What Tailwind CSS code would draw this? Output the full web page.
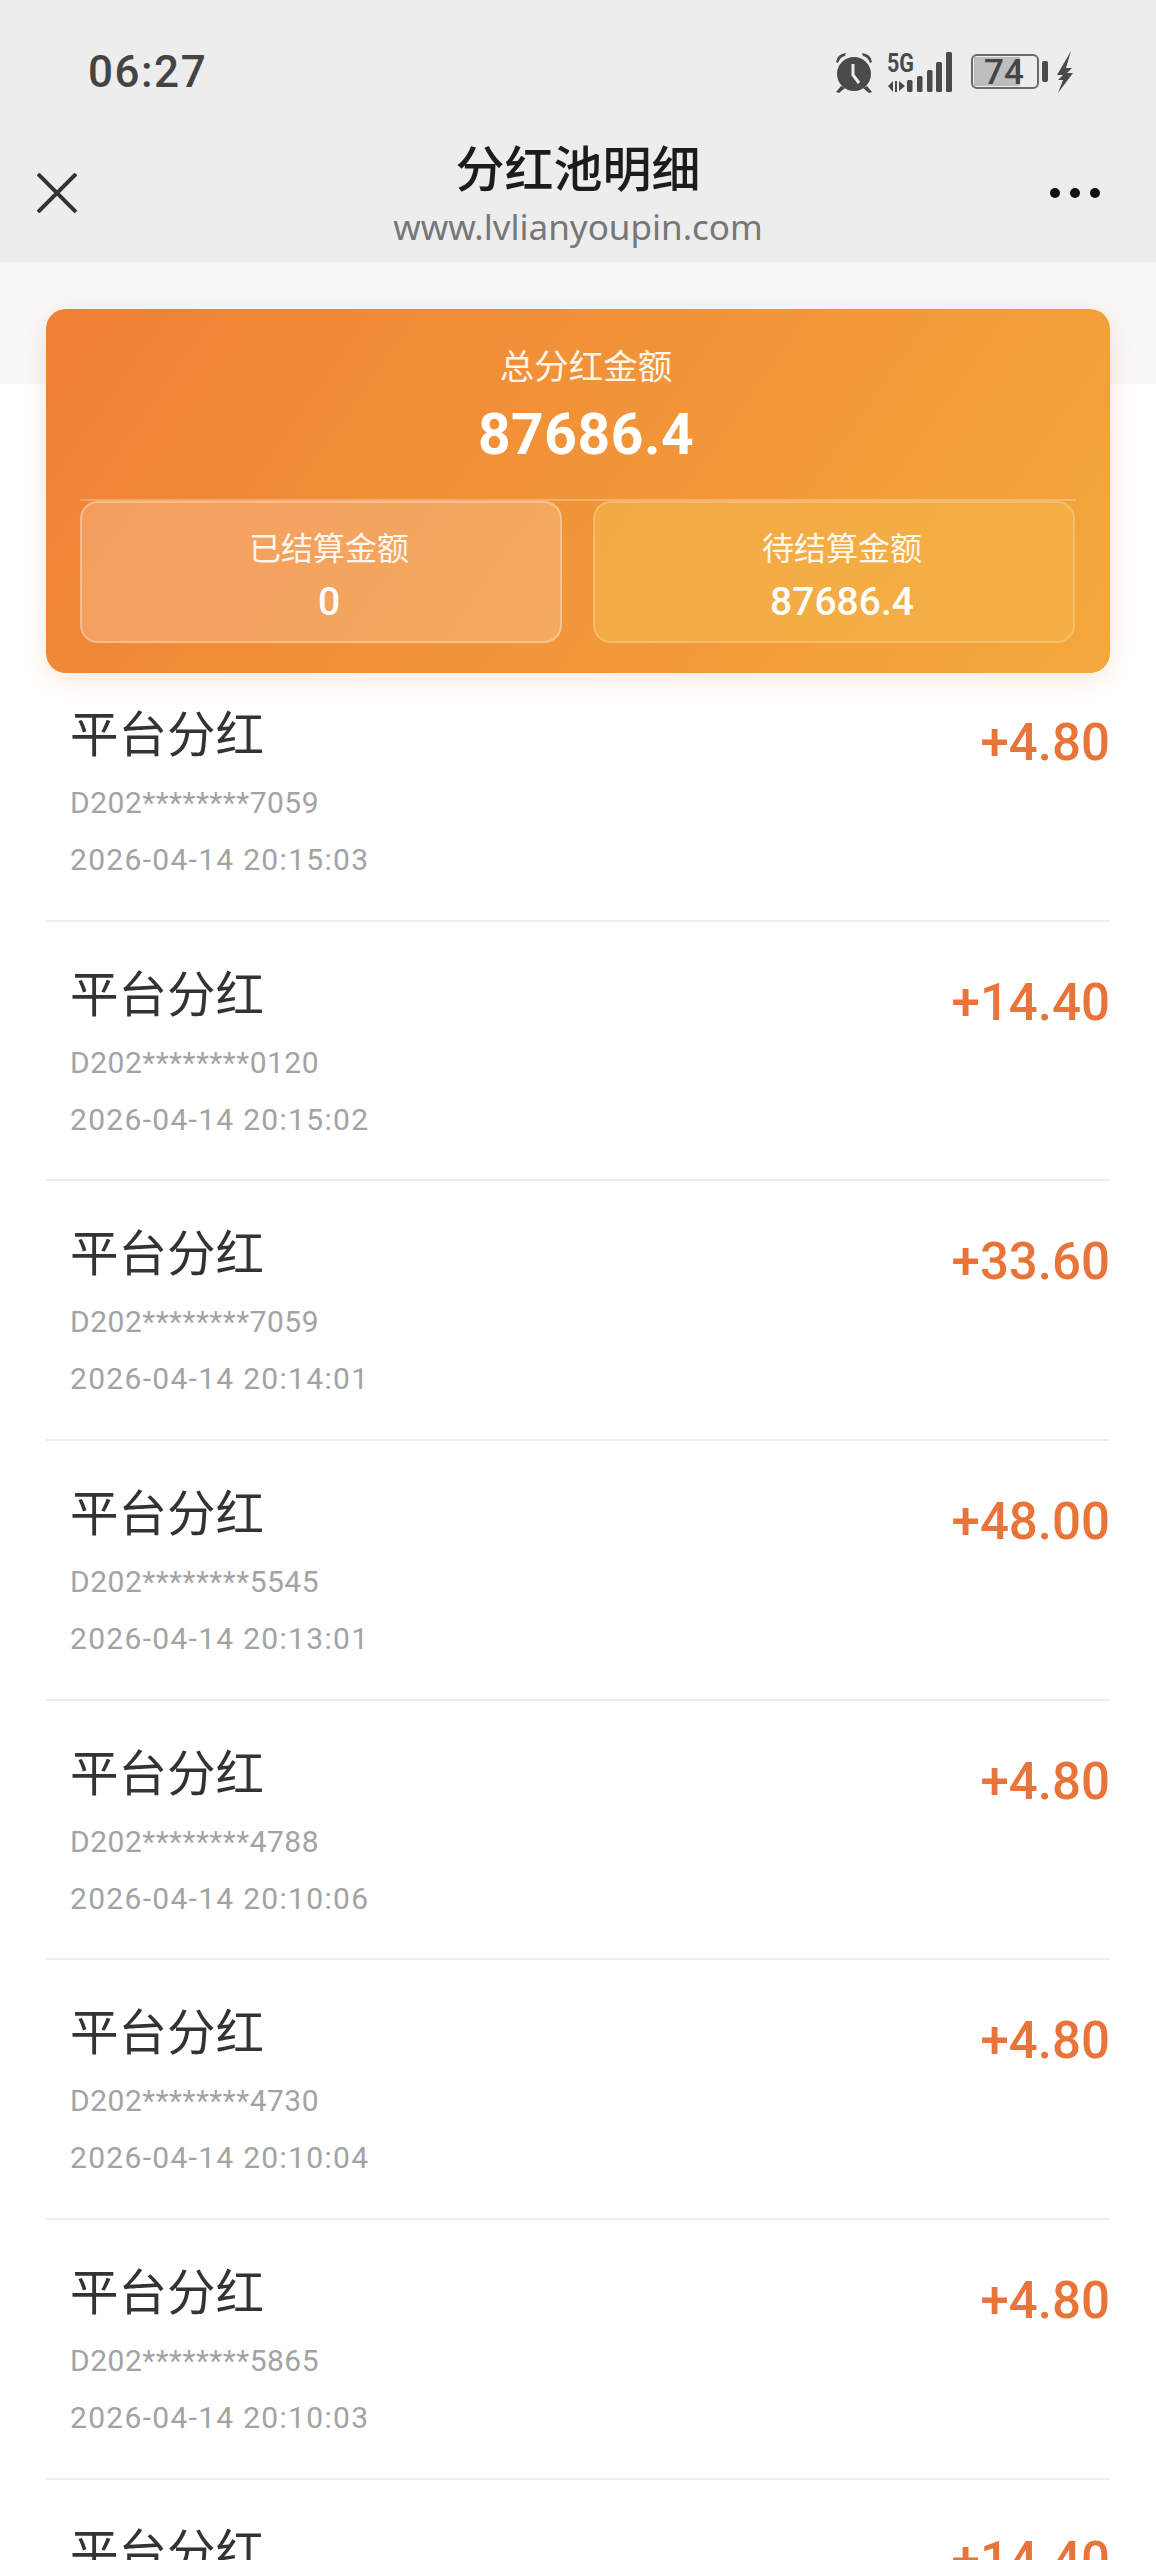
<!DOCTYPE html>
<html lang="zh-CN">
<head>
    <meta charset="UTF-8">
    <meta name="viewport" content="width=device-width, initial-scale=1.0">
    <title>分红池明细</title>
    <script src="https://cdn.jsdelivr.net/npm/@tailwindcss/browser@4"></script>
</head>
<body class="bg-white w-[1156px] h-[2560px] overflow-hidden font-['Roboto','Noto_Sans_CJK_SC',sans-serif]">

    <!-- 状态栏 + 导航 -->
    <header class="bg-[#ededed] h-[262px] flex flex-col">
        <div class="h-[144px] pt-[46px] pl-[88px] pr-[80px] flex justify-between items-start">
            <span class="text-[44px] leading-[52px] font-medium tracking-[1.5px] text-[#444]">06:27</span>
            <svg class="mt-[4px]" width="244" height="44" viewBox="832 50 244 44" fill="#4a4a4a">
                <circle cx="854" cy="74" r="17"/>
                <path d="M836 62 q1 -8 10 -9 l-1 3 q-5 1 -7 7z M872 62 q-1 -8 -10 -9 l1 3 q5 1 7 7z"/>
                <path d="M841 86 l-5 6 3 1 6 -5z M867 86 l5 6 -3 1 -6 -5z"/>
                <path d="M853 64 v11 l6 8" fill="none" stroke="#ededed" stroke-width="3"/>
                <text x="887" y="72" font-family="Roboto" font-size="25" font-weight="700" textLength="27" lengthAdjust="spacingAndGlyphs">5G</text>
                <path d="M888 86 l5 -5 v11z M895 92 v-11 h2 v11z M899 81 l6 5 -6 5z"/>
                <rect x="907" y="80" width="5.5" height="12" rx="1.5"/>
                <rect x="917" y="76" width="5.5" height="16" rx="1.5"/>
                <rect x="927" y="70" width="5.5" height="22" rx="1.5"/>
                <rect x="936" y="62" width="6" height="30" rx="1.5"/>
                <rect x="946" y="52" width="6" height="40" rx="1.5"/>
                <rect x="972" y="55" width="66" height="33" rx="5" fill="#ededed" stroke="#6a6a6a" stroke-width="2"/>
                <path d="M974 57 h46 v29 h-46z" fill="#bdbdbd"/>
                <text x="984" y="84" font-family="Roboto" font-size="35" font-weight="500" fill="#444">74</text>
                <rect x="1042" y="61" width="6" height="21" rx="2"/>
                <path d="M1071 51 l-14 24 h6 l-5 5 5 0 -5 13 15 -20 h-6 l5 -5 h-6z"/>
            </svg>
        </div>
        <div class="relative flex flex-col items-center">
            <h1 class="text-[49px] leading-[56px] font-medium text-[#1c1c1c] -mt-[1px]">分红池明细</h1>
            <p class="font-['Noto_Sans',sans-serif] text-[35px] leading-[44px] text-[#777] mt-[6px]">www.lvlianyoupin.com</p>
            <svg class="absolute left-[37px] top-[29px]" width="40" height="40" viewBox="0 0 40 40" stroke="#333" stroke-width="4"><path d="M1 1 L39 39 M39 1 L1 39"/></svg>
            <div class="absolute left-[1050px] top-[44px] flex gap-[10px]">
                <span class="w-[10px] h-[10px] rounded-full bg-[#111]"></span>
                <span class="w-[10px] h-[10px] rounded-full bg-[#111]"></span>
                <span class="w-[10px] h-[10px] rounded-full bg-[#111]"></span>
            </div>
        </div>
    </header>

    <main class="relative pt-[47px]">
        <div class="absolute inset-x-0 top-0 h-[122px] bg-[#f8f8f8]"></div>

        <!-- 汇总卡片 -->
        <section class="relative z-10 mx-[46px] h-[364px] rounded-[20px] bg-linear-[125deg,#ef8035,#f4a83c] shadow-[0_6px_28px_rgba(240,130,50,0.2)] px-[34px] text-white text-center">
            <div class="h-[192px] border-b-2 border-white/25 pl-[16px]">
                <p class="text-[34.5px] leading-[40px] pt-[38px] box-content text-white/90">总分红金额</p>
                <p class="text-[57px] leading-[68px] font-bold mt-[14px] tracking-[0.5px]">87686.4</p>
            </div>
            <div class="flex gap-[31px]">
                <div class="w-[482px] h-[142px] rounded-[18px] border-2 border-white/30 bg-white/20 pt-[27px] pl-[16px]">
                    <p class="text-[32px] leading-[38px] text-white/90">已结算金额</p>
                    <p class="text-[39px] leading-[46px] font-medium mt-[11px]">0</p>
                </div>
                <div class="w-[482px] h-[142px] rounded-[18px] border-2 border-white/20 bg-[#f4b44a]/70 pt-[27px] pl-[16px]">
                    <p class="text-[32px] leading-[38px] text-white/90">待结算金额</p>
                    <p class="text-[39px] leading-[46px] font-medium mt-[11px]">87686.4</p>
                </div>
            </div>
        </section>

        <!-- 明细列表 -->
        <ul class="relative mx-[46px] -mt-[11px]">
            <li class="h-[259.67px] border-b-2 border-[#eeeeee] flex justify-between pt-[46px]">
                <div class="pl-[24px]">
                    <p class="text-[48.5px] leading-[56px] text-[#333]">平台分红</p>
                    <p class="text-[30px] leading-[36px] tracking-[0.5px] text-[#a3a3a3] mt-[21px]">D202********7059</p>
                    <p class="text-[30px] leading-[36px] tracking-[1.3px] text-[#a3a3a3] mt-[21px]">2026-04-14 20:15:03</p>
                </div>
                <p class="text-[51px] leading-[54px] font-medium text-[#e8743a] mt-[8px]">+4.80</p>
            </li>
            <li class="h-[259.67px] border-b-2 border-[#eeeeee] flex justify-between pt-[46px]">
                <div class="pl-[24px]">
                    <p class="text-[48.5px] leading-[56px] text-[#333]">平台分红</p>
                    <p class="text-[30px] leading-[36px] tracking-[0.5px] text-[#a3a3a3] mt-[21px]">D202********0120</p>
                    <p class="text-[30px] leading-[36px] tracking-[1.3px] text-[#a3a3a3] mt-[21px]">2026-04-14 20:15:02</p>
                </div>
                <p class="text-[51px] leading-[54px] font-medium text-[#e8743a] mt-[8px]">+14.40</p>
            </li>
            <li class="h-[259.67px] border-b-2 border-[#eeeeee] flex justify-between pt-[46px]">
                <div class="pl-[24px]">
                    <p class="text-[48.5px] leading-[56px] text-[#333]">平台分红</p>
                    <p class="text-[30px] leading-[36px] tracking-[0.5px] text-[#a3a3a3] mt-[21px]">D202********7059</p>
                    <p class="text-[30px] leading-[36px] tracking-[1.3px] text-[#a3a3a3] mt-[21px]">2026-04-14 20:14:01</p>
                </div>
                <p class="text-[51px] leading-[54px] font-medium text-[#e8743a] mt-[8px]">+33.60</p>
            </li>
            <li class="h-[259.67px] border-b-2 border-[#eeeeee] flex justify-between pt-[46px]">
                <div class="pl-[24px]">
                    <p class="text-[48.5px] leading-[56px] text-[#333]">平台分红</p>
                    <p class="text-[30px] leading-[36px] tracking-[0.5px] text-[#a3a3a3] mt-[21px]">D202********5545</p>
                    <p class="text-[30px] leading-[36px] tracking-[1.3px] text-[#a3a3a3] mt-[21px]">2026-04-14 20:13:01</p>
                </div>
                <p class="text-[51px] leading-[54px] font-medium text-[#e8743a] mt-[8px]">+48.00</p>
            </li>
            <li class="h-[259.67px] border-b-2 border-[#eeeeee] flex justify-between pt-[46px]">
                <div class="pl-[24px]">
                    <p class="text-[48.5px] leading-[56px] text-[#333]">平台分红</p>
                    <p class="text-[30px] leading-[36px] tracking-[0.5px] text-[#a3a3a3] mt-[21px]">D202********4788</p>
                    <p class="text-[30px] leading-[36px] tracking-[1.3px] text-[#a3a3a3] mt-[21px]">2026-04-14 20:10:06</p>
                </div>
                <p class="text-[51px] leading-[54px] font-medium text-[#e8743a] mt-[8px]">+4.80</p>
            </li>
            <li class="h-[259.67px] border-b-2 border-[#eeeeee] flex justify-between pt-[46px]">
                <div class="pl-[24px]">
                    <p class="text-[48.5px] leading-[56px] text-[#333]">平台分红</p>
                    <p class="text-[30px] leading-[36px] tracking-[0.5px] text-[#a3a3a3] mt-[21px]">D202********4730</p>
                    <p class="text-[30px] leading-[36px] tracking-[1.3px] text-[#a3a3a3] mt-[21px]">2026-04-14 20:10:04</p>
                </div>
                <p class="text-[51px] leading-[54px] font-medium text-[#e8743a] mt-[8px]">+4.80</p>
            </li>
            <li class="h-[259.67px] border-b-2 border-[#eeeeee] flex justify-between pt-[46px]">
                <div class="pl-[24px]">
                    <p class="text-[48.5px] leading-[56px] text-[#333]">平台分红</p>
                    <p class="text-[30px] leading-[36px] tracking-[0.5px] text-[#a3a3a3] mt-[21px]">D202********5865</p>
                    <p class="text-[30px] leading-[36px] tracking-[1.3px] text-[#a3a3a3] mt-[21px]">2026-04-14 20:10:03</p>
                </div>
                <p class="text-[51px] leading-[54px] font-medium text-[#e8743a] mt-[8px]">+4.80</p>
            </li>
            <li class="h-[80px] overflow-hidden flex justify-between pt-[46px]">
                <div class="pl-[24px]">
                    <p class="text-[48.5px] leading-[56px] text-[#333]">平台分红</p>
                </div>
                <p class="text-[51px] leading-[54px] font-medium text-[#e8743a] mt-[8px]">+14.40</p>
            </li>
        </ul>
    </main>

</body>
</html>
